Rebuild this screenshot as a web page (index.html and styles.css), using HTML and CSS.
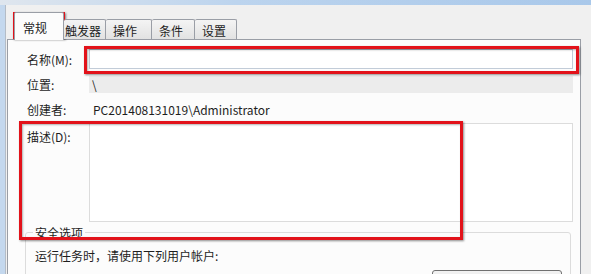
FILE: index.html
```html
<!DOCTYPE html>
<html lang="zh-cn">

<head>
    <meta charset="UTF-8">
    <meta name="viewport" content="width=device-width, initial-scale=1.0">
    <title>常规</title>
    <link rel="stylesheet" href="styles.css">
</head>

<body>
    <div class="titlebar"></div>

    <div class="window">
        <div class="edge"></div>
        <div class="dialog">
            <div class="tabs">
                <div class="tab active">常规</div>
                <div class="tab t1">触发器</div>
                <div class="tab t2">操作</div>
                <div class="tab t3">条件</div>
                <div class="tab t4">设置</div>
            </div>

            <div class="panel">
                <div class="row name-row">
                    <span class="label">名称(M):</span>
                    <div class="textbox"></div>
                </div>
                <div class="row loc-row">
                    <span class="label">位置:</span>
                    <div class="readonly">\</div>
                </div>
                <div class="row author-row">
                    <span class="label">创建者:</span>
                    <div class="value">PC201408131019\Administrator</div>
                </div>
                <div class="row desc-row">
                    <span class="label">描述(D):</span>
                    <div class="textarea"></div>
                </div>

                <fieldset class="group">
                    <legend>安全选项</legend>
                    <div class="group-text">运行任务时，请使用下列用户帐户:</div>
                    <div class="user-row">
                        <!-- 按钮只露出上沿 -->
                        <button class="btn"></button>
                    </div>
                </fieldset>
            </div>
        </div>
    </div>

    <!-- 红框标注 -->
    <div class="mark mark-tab"></div>
    <div class="mark mark-name"></div>
    <div class="mark mark-desc"></div>
</body>

</html>
```

FILE: styles.css
```css
body {
    margin: 0;
    background: #f0f0f0;
    font-family: "Noto Sans CJK SC", "Noto Sans", sans-serif;
    font-size: 12px;
    color: #1e1e1e;
    overflow: hidden;
    height: 274px;
}

.titlebar {
    height: 5px;
    background: linear-gradient(to right, #dfe6ee, #bcd4ee 40%, #a9c8ea);
}

.window {
    display: flex;
}

.edge {
    width: 5px;
    background: #c4d8ee;
    border-right: 1px solid #b4bcc6;
    height: 269px;
}

.dialog {
    padding: 7px 0 0 1px;
}

.tabs {
    display: flex;
    align-items: flex-end;
    margin-left: 7px;
    height: 27px;
    position: relative;
    z-index: 1;
}

.tab {
    height: 20px;
    line-height: 21px;
    padding-left: 7px;
    box-sizing: border-box;
    border: 1px solid #9a9ea6;
    border-bottom: none;
    border-left: none;
    background: linear-gradient(#f4f4f4, #e2e2e2);
    border-radius: 2px 2px 0 0;
}

.tab.active {
    width: 50px;
    height: 28px;
    line-height: 30px;
    padding-left: 8px;
    border-left: 1px solid #9a9ea6;
    background: #fcfcfc;
    margin-bottom: -1px;
}

.t1 { width: 42px; padding-left: 1px; }
.t2 { width: 46px; }
.t3 { width: 43px; }
.t4 { width: 42px; }

.panel {
    width: 574px;
    height: 240px;
    border: 1px solid #9a9ea6;
    background: #fcfcfc;
    padding: 9px 7px 0 19px;
    box-sizing: border-box;
}

.row {
    display: grid;
    grid-template-columns: 62px 1fr;
    align-items: center;
}

.textbox {
    height: 20px;
    border: 1px solid #c2ccd8;
    border-top-color: #aab4c0;
    background: #fff;
    box-sizing: border-box;
}

.loc-row {
    margin-top: 7px;
}

.readonly {
    height: 17px;
    line-height: 17px;
    background: #ececec;
    padding-left: 3px;
}

.author-row {
    margin-top: 7px;
    height: 18px;
}

.value {
    padding-left: 4px;
}

.desc-row {
    margin-top: 5px;
    align-items: start;
}

.desc-row .label {
    margin-top: 5px;
}

.textarea {
    height: 99px;
    border: 1px solid #dcdcdc;
    background: #fff;
    box-sizing: border-box;
}

.group {
    margin: 2px 0 0 0;
    padding: 2px 9px 0 9px;
    border: 1px solid #dcdcdc;
    border-radius: 3px;
    height: 60px;
    position: relative;
    left: -2px;
}

.group legend {
    padding: 0 2px;
    margin-left: -2px;
}

.group-text {
    margin-top: 4px;
    height: 18px;
}

.user-row {
    display: flex;
    justify-content: flex-end;
    margin-top: 5px;
}

.btn {
    width: 130px;
    height: 23px;
    margin-right: -1px;
    border: 1px solid #707070;
    border-radius: 3px;
    background: linear-gradient(#f2f2f2, #ebebeb 50%, #dddddd 51%, #cfcfcf);
    font: inherit;
    color: #1e1e1e;
}

/* 红框 */
.mark {
    position: absolute;
    border: 3px solid #e2121a;
    box-shadow: 1px 1px 2px rgba(0, 0, 0, 0.45), inset 1px 1px 2px rgba(0, 0, 0, 0.3);
    box-sizing: border-box;
}

.mark-tab {
    left: 13px;
    top: 12px;
    width: 52px;
    height: 27px;
}

.mark-name {
    left: 84px;
    top: 46px;
    width: 495px;
    height: 28px;
}

.mark-desc {
    left: 19px;
    top: 121px;
    width: 444px;
    height: 119px;
}
```
